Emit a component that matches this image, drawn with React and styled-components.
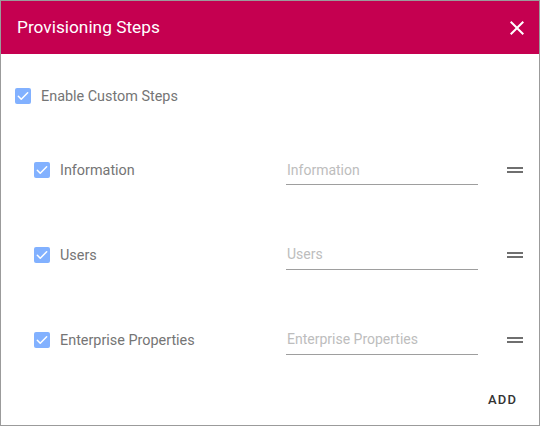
import React, { useState } from 'react';
import styled, { createGlobalStyle } from 'styled-components';

const GlobalStyle = createGlobalStyle`
  html, body {
    margin: 0;
    padding: 0;
    background: #ffffff;
  }
  body {
    font-family: Roboto, "Liberation Sans", Arial, sans-serif;
  }
`;

const Dialog = styled.div`
  width: 540px;
  height: 426px;
  box-sizing: border-box;
  border: 1px solid #9b9b9b;
  background: #fff;
  display: flex;
  flex-direction: column;
`;

const Header = styled.header`
  height: 53px;
  flex-shrink: 0;
  background: #c50050;
  display: flex;
  align-items: center;
  justify-content: space-between;
  padding: 0 10px 0 16px;
`;

const Title = styled.h2`
  margin: 0;
  font-size: 17.3px;
  font-weight: 400;
  color: #fff;
  line-height: 1;
`;

const IconButton = styled.button`
  border: 0;
  background: transparent;
  padding: 0;
  width: 24px;
  height: 24px;
  display: flex;
  cursor: pointer;
`;

const Body = styled.div`
  flex: 1;
  padding: 34px 0 0 14px;
  display: flex;
  flex-direction: column;
`;

const CheckRow = styled.label`
  display: flex;
  align-items: center;
  gap: 10px;
  height: 16px;
  width: ${(p) => p.width || 'auto'};
  cursor: pointer;
`;

const LabelText = styled.span`
  padding-top: 2px;
  font-size: 14.4px;
  line-height: 16px;
  color: #757575;
`;

const Box = styled.span`
  width: 16px;
  height: 16px;
  border-radius: 2px;
  background: ${(p) => (p.checked ? '#82b1ff' : '#fff')};
  border: ${(p) => (p.checked ? 'none' : '2px solid #9e9e9e')};
  box-sizing: border-box;
  display: flex;
  align-items: center;
  justify-content: center;
  flex-shrink: 0;
`;

const StepList = styled.div`
  margin-top: 51px;
  padding-left: 19px;
  display: flex;
  flex-direction: column;
  gap: 54.8px;
`;

const StepRow = styled.div`
  display: flex;
  align-items: center;
  height: 30px;
`;

const NameInput = styled.input`
  width: 192px;
  height: 30px;
  box-sizing: border-box;
  border: 0;
  border-bottom: 1px solid #9e9e9e;
  outline: none;
  padding: 0 1px;
  font-family: inherit;
  font-size: 14px;
  color: #424242;
  background: transparent;
  &::placeholder {
    color: #bdbdbd;
  }
`;

const Handle = styled.span`
  margin-left: 25px;
  width: 24px;
  height: 24px;
  display: flex;
  cursor: grab;
`;

const Footer = styled.div`
  display: flex;
  justify-content: flex-end;
  padding: 0 8px 0 0;
  margin-top: 27px;
`;

const TextButton = styled.button`
  border: 0;
  background: transparent;
  height: 36px;
  padding: 0 14px;
  font-family: inherit;
  font-size: 13px;
  font-weight: 500;
  letter-spacing: 1.1px;
  color: #333;
  cursor: pointer;
`;

const Check = ({ checked }) => (
  <Box checked={checked}>
    {checked && (
      <svg width="14" height="14" viewBox="0 0 24 24">
        <path
          d="M4 12.5l5 5L20 6.5"
          fill="none"
          stroke="#fff"
          strokeWidth="2.6"
          strokeLinecap="round"
          strokeLinejoin="round"
        />
      </svg>
    )}
  </Box>
);

const steps = ['Information', 'Users', 'Enterprise Properties'];

const App = () => {
  const [custom, setCustom] = useState(true);
  return (
    <>
      <GlobalStyle />
      <Dialog>
        <Header>
          <Title>Provisioning Steps</Title>
          <IconButton aria-label="close">
            <svg width="24" height="24" viewBox="0 0 24 24">
              <path
                fill="#fff"
                d="M19 6.41L17.59 5 12 10.59 6.41 5 5 6.41 10.59 12 5 17.59 6.41 19 12 13.41 17.59 19 19 17.59 13.41 12z"
              />
            </svg>
          </IconButton>
        </Header>
        <Body>
          <CheckRow onClick={() => setCustom(!custom)}>
            <Check checked={custom} />
            <LabelText>Enable Custom Steps</LabelText>
          </CheckRow>
          <StepList>
            {steps.map((step) => (
              <StepRow key={step}>
                <CheckRow width="252px">
                  <Check checked />
                  <LabelText>{step}</LabelText>
                </CheckRow>
                <NameInput placeholder={step} />
                <Handle>
                  <svg width="24" height="24" viewBox="0 0 24 24">
                    <path fill="#6f6f6f" d="M20 9H4v2h16V9zM4 15h16v-2H4v2z" />
                  </svg>
                </Handle>
              </StepRow>
            ))}
          </StepList>
          <Footer>
            <TextButton>ADD</TextButton>
          </Footer>
        </Body>
      </Dialog>
    </>
  );
};

export default App;
